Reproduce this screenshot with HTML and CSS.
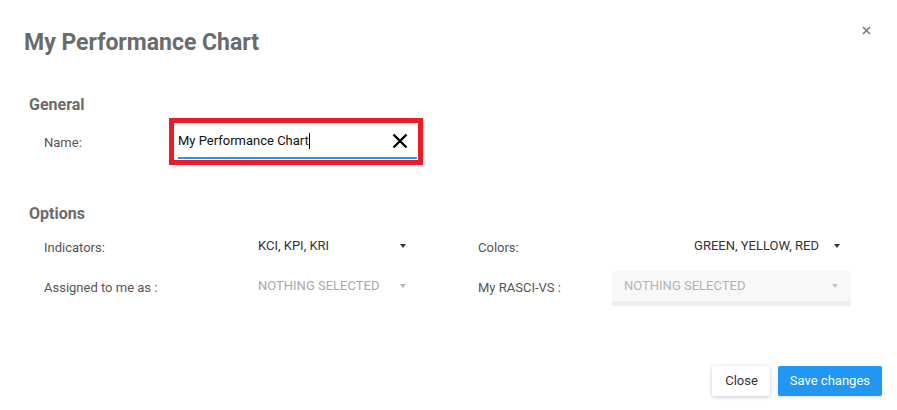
FILE: index.html
```html
<!DOCTYPE html>
<html lang="en">
<head>
<meta charset="utf-8">
<title>My Performance Chart</title>
<link rel="stylesheet" href="styles.css">
</head>
<body>
<div class="dialog">
  <div class="header">
    <h1 class="title">My Performance Chart</h1>
    <button class="dismiss" aria-label="Close">
      <svg width="9" height="9" viewBox="0 0 9 9"><path d="M1 1 L8 8 M8 1 L1 8" stroke="#7a7a7a" stroke-width="1.6" fill="none"/></svg>
    </button>
  </div>

  <h2 class="section-title general">General</h2>
  <div class="name-row">
    <span class="label name-label">Name:</span>
    <div class="highlight">
      <div class="field">
        <span class="field-text">My Performance Chart</span><span class="text-caret"></span>
        <svg class="clear" width="16" height="16" viewBox="0 0 16 16"><path d="M1.5 1.5 L14.5 14.5 M14.5 1.5 L1.5 14.5" stroke="#000" stroke-width="2.4" fill="none"/></svg>
      </div>
    </div>
  </div>

  <h2 class="section-title options">Options</h2>
  <div class="options-grid">
    <span class="label opt-label">Indicators:</span>
    <div class="select select-short"><span class="sel-text">KCI, KPI, KRI</span><span class="caret"></span></div>
    <span class="label opt-label">Colors:</span>
    <div class="select select-wide select-right"><span class="sel-text">GREEN, YELLOW, RED</span><span class="caret"></span></div>

    <span class="label opt-label">Assigned to me as :</span>
    <div class="select select-short is-empty"><span class="sel-text">NOTHING SELECTED</span><span class="caret"></span></div>
    <span class="label opt-label">My RASCI-VS :</span>
    <div class="select select-wide is-disabled"><span class="sel-text">NOTHING SELECTED</span><span class="caret"></span></div>
  </div>

  <div class="footer">
    <button class="btn btn-default">Close</button>
    <button class="btn btn-primary">Save changes</button>
  </div>
</div>
</body>
</html>
```

FILE: styles.css
```css
* { box-sizing: border-box; }
html, body { margin: 0; padding: 0; background: #fff; }
body { font-family: Roboto, "Noto Sans", "Liberation Sans", sans-serif; color: #333; }

.dialog {
  width: 897px;
  height: 410px;
  display: flex;
  flex-direction: column;
  background: #fff;
}

.header {
  display: flex;
  justify-content: space-between;
  align-items: flex-start;
  padding: 26px 26px 0 24px;
}
.title {
  margin: 3px 0 0 0;
  font-size: 23px;
  line-height: 28px;
  font-weight: 700;
  color: #6b6b6b;
}
.dismiss {
  border: 0;
  background: none;
  padding: 0;
  width: 9px;
  height: 9px;
  display: block;
  cursor: pointer;
}
.dismiss svg { display: block; }

.section-title {
  margin: 0;
  padding-left: 29px;
  font-size: 16px;
  line-height: 20px;
  font-weight: 700;
  color: #6b6b6b;
}
.general { margin-top: 38px; margin-bottom: 3px; }
.options { margin-top: 39px; margin-bottom: 7px; }

.label {
  font-size: 13px;
  line-height: 16px;
  color: #555;
}

.name-row {
  display: flex;
  align-items: center;
  padding-left: 44px;
}
.name-label { width: 125px; padding-top: 3px; }

.highlight {
  width: 254px;
  height: 47px;
  border: 5px solid #ed1c24;
  padding: 0 1px 1px 4px;
}
.field {
  height: 36px;
  border-bottom: 2px solid #2196f3;
  padding: 2px 9px 0 0;
  display: flex;
  align-items: center;
}
.field-text {
  font-size: 13px;
  line-height: 16px;
  color: #111;
}
.text-caret {
  width: 1px;
  height: 16px;
  background: #000;
}
.clear { margin-left: auto; display: block; }

.options-grid {
  display: grid;
  grid-template-columns: 214px 220px 134px 239px;
  grid-auto-rows: 30px;
  row-gap: 10px;
  padding-left: 44px;
  align-items: center;
}
.opt-label { padding-top: 4px; }

.select {
  height: 30px;
  display: flex;
  align-items: center;
  font-size: 13px;
  line-height: 16px;
  color: #333;
  padding-right: 11px;
}
.select-short { width: 159px; }
.select-wide { width: 239px; }
.select .caret {
  margin-left: auto;
  width: 0;
  height: 0;
  border-top: 4px solid #333;
  border-left: 3.5px solid transparent;
  border-right: 3.5px solid transparent;
}
.select-right { justify-content: flex-end; }
.select-right .caret { margin-left: 15px; }

.is-empty { color: #a9a9a9; }
.is-empty .caret { border-top-color: #b5b5b5; }

.is-disabled {
  height: 35px;
  align-self: start;
  background: #f8f8f8;
  border-bottom: 5px solid #eeeeee;
  padding: 0 13px 0 12px;
  color: #b3b3b3;
}
.is-disabled .caret { border-top-color: #c2c2c2; }

.footer {
  margin-top: auto;
  display: flex;
  justify-content: flex-end;
  gap: 8px;
  padding: 0 15px 14px 0;
}
.btn {
  height: 30px;
  border: 0;
  border-radius: 2px;
  font-family: Roboto, "Noto Sans", "Liberation Sans", sans-serif;
  font-size: 13px;
  line-height: 16px;
  padding: 0 12px;
  cursor: pointer;
}
.btn-default {
  background: #fff;
  color: #333;
  padding-left: 13px;
  box-shadow: 0 1px 4px rgba(0,0,0,0.22);
}
.btn-primary {
  background: #2196f3;
  color: #fff;
  box-shadow: 0 1px 3px rgba(0,0,0,0.15);
}
```
